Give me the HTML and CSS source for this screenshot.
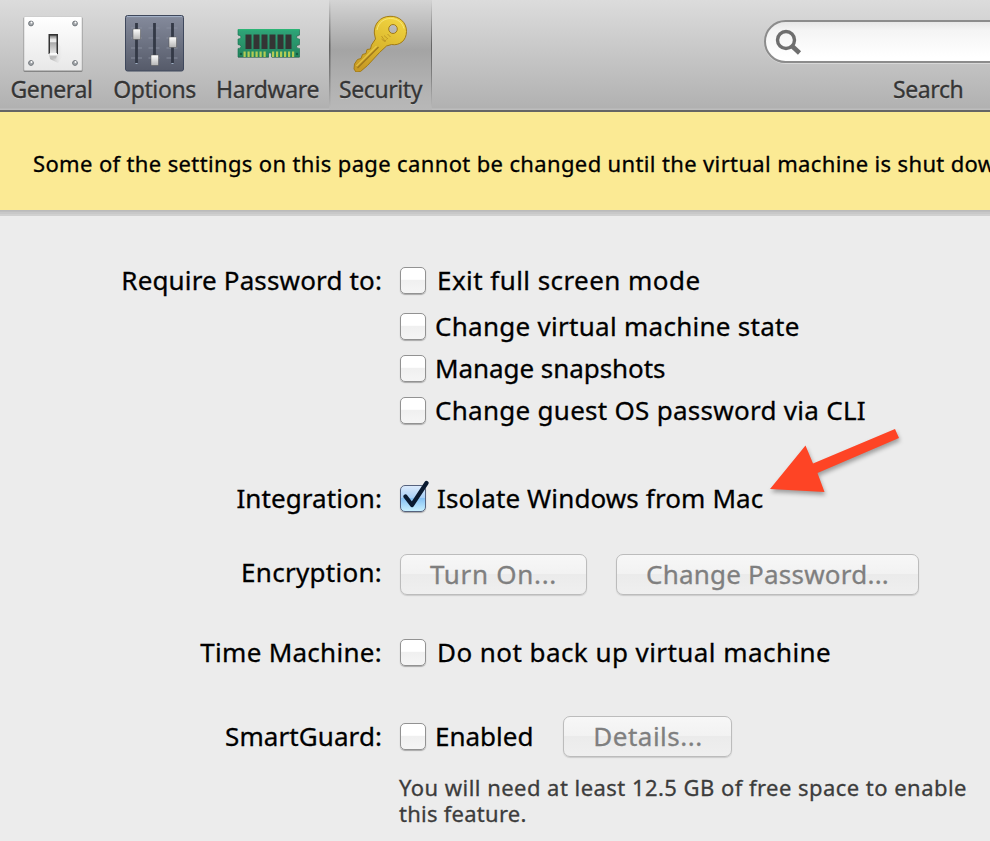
FILE: index.html
```html
<!DOCTYPE html>
<html lang="en">
<head>
<meta charset="utf-8">
<title>Security</title>
<link rel="stylesheet" href="styles.css">
</head>
<body>
<header class="toolbar">
  <nav class="tabs">
    <div class="tab tab-general">
      <svg class="icon" width="64" height="64" viewBox="0 0 64 64">
        <defs>
          <linearGradient id="plate" x2="0" y2="1"><stop stop-color="#fff"/><stop offset="1" stop-color="#e8e8e8"/></linearGradient>
          <linearGradient id="sw" x2="0" y2="1"><stop stop-color="#777"/><stop offset=".2" stop-color="#e8e8e8"/><stop offset=".32" stop-color="#eee"/><stop offset=".36" stop-color="#aaa"/><stop offset=".85" stop-color="#e2e2e2"/><stop offset="1" stop-color="#fff"/></linearGradient>
          <linearGradient id="sh" x2="1" y2="0"><stop stop-color="#888"/><stop offset="1" stop-color="#eee" stop-opacity="0"/></linearGradient>
        </defs>
        <rect x="3.500" y="9" width="59" height="55" rx="1.500" fill="#858585"/>
        <rect x="4" y="8.500" width="58" height="54" rx="1" fill="url(#plate)" stroke="#bbb" stroke-width=".6"/>
        <path d="M37 34l6 7q0 9-5 14l-8-4z" fill="url(#sh)" opacity=".7"/>
        <path d="M28.500 26h9.500v20h-9.500z" fill="#333"/>
        <rect x="30" y="27.500" width="6.500" height="20" fill="url(#sw)"/>
        <path d="M29 46h8.500l-1.500 4.500h-6z" fill="#bcbcbc"/>
        <path d="M29.500 45h7.500v2.500h-7.500z" fill="#fafafa"/>
        <g fill="#a3a7ab" stroke="#70757a"><circle cx="11" cy="15.500" r="2.400"/><circle cx="55" cy="15.500" r="2.400"/><circle cx="11" cy="55" r="2.400"/><circle cx="55" cy="55" r="2.400"/></g>
        <g fill="#fff"><circle cx="11.500" cy="14.500" r="1"/><circle cx="55.500" cy="14.500" r="1"/><circle cx="11.500" cy="54" r="1"/><circle cx="55.500" cy="54" r="1"/></g>
      </svg>
      <span class="tab-name">General</span>
    </div>
    <div class="tab tab-options">
      <svg class="icon" width="64" height="64" viewBox="0 0 64 64">
        <defs>
          <linearGradient id="board" x2="0" y2="1"><stop stop-color="#858b9c"/><stop offset="1" stop-color="#555a69"/></linearGradient>
          <linearGradient id="knob" x2="0" y2="1"><stop stop-color="#fff"/><stop offset="1" stop-color="#b5b5b5"/></linearGradient>
        </defs>
        <rect x="2.500" y="7.500" width="58" height="55.500" rx="2" fill="url(#board)" stroke="#3f485c"/>
        <path d="M4 8.600h55" stroke="#a7b4cb"/>
        <path d="M8 20h11M25.500 20h11M43.500 20h11M8 30h11M25.500 30h11M43.500 30h11M8 40h11M25.500 40h11M43.500 40h11M8 50h11M25.500 50h11M43.500 50h11" stroke="#8a90a0" stroke-width="1.500" opacity=".6"/>
        <path d="M13.500 15v40M31.500 15v40M49.500 15v40" stroke="#333946" stroke-width="2.800"/>
        <path d="M12.500 55.500h2M48.500 55.500h2" stroke="#9fb0c4"/>
        <g fill="url(#knob)" stroke="#555" stroke-width=".5"><rect x="10" y="21" width="7.500" height="10.500" rx=".7"/><rect x="28" y="47" width="7.500" height="10.500" rx=".7"/><rect x="46" y="29" width="7.500" height="10.500" rx=".7"/></g>
      </svg>
      <span class="tab-name">Options</span>
    </div>
    <div class="tab tab-hardware">
      <svg class="icon" width="64" height="64" viewBox="-1.500 -.5 64 64">
        <defs><linearGradient id="ram" x2="0" y2="1"><stop stop-color="#2fa478"/><stop offset="1" stop-color="#23855e"/></linearGradient></defs>
        <path d="M.500 22H62v5.500q-3 0-3 2t3 2V37q-3 0-3 2t3 2v8.500H34.500v-4q-2-2-3 0v4H.500v-9q3 0 3-2t-3-2v-5.500q3 0 3-2t-3-2z" fill="#555" opacity=".5"/>
        <path d="M.500 21H62v5.500q-3 0-3 2t3 2V36q-3 0-3 2t3 2v8.500H34V45q-2-2-3 0v3.500H.500V40q3 0 3-2t-3-2v-5.500q3 0 3-2t-3-2z" fill="url(#ram)" stroke="#16704e" stroke-width=".6"/>
        <path d="M.500 21.200h61.500" stroke="#28bd77"/>
        <path d="M8 26h6v14.500H8zM16 26h6v14.500h-6zM24 26h6v14.500h-6zM32 26h6v14.500h-6zM40 26h6v14.500h-6zM48 26h6v14.500h-6z" fill="#343434"/>
        <path d="M6 43h2.200v5.500H6zM10 43h2.200v5.500H10zM14 43h2.200v5.500H14zM18 43h2.200v5.500H18zM22 43h2.200v5.500H22zM26 43h2.200v5.500H26zM34.500 43h2.200v5.500h-2.200zM38.500 43h2.200v5.500h-2.200zM42.500 43h2.200v5.500h-2.200zM46.500 43h2.200v5.500h-2.200zM50.500 43h2.200v5.500h-2.200zM54.500 43h2.200v5.500h-2.200z" fill="#b4cb55"/>
        <circle cx="3.500" cy="45.500" r="1.200" fill="#155c40"/><circle cx="59.500" cy="45.500" r="1.200" fill="#155c40"/>
      </svg>
      <span class="tab-name">Hardware</span>
    </div>
    <div class="tab tab-security selected">
      <svg class="icon" width="64" height="64" viewBox="1.500 0 64 64">
        <defs><linearGradient id="gold" x1=".7" x2=".3" y2="1"><stop stop-color="#f0d340"/><stop offset=".5" stop-color="#dcb92e"/><stop offset="1" stop-color="#c89a24"/></linearGradient></defs>
        <path d="M42.500 8.300C32 8.500 26.500 16.500 26.800 25L28 31l-4 6-1 4-3.500.5-1 4-3.500 1-1.500 4-3.500 1-3 4.500-.5 5 2 3 4.500-.5 7-6 12-13 7-6.500 5-1.500C52 38 59 32.500 59 23.500 59 14 51.500 8 42.500 8.300zM45.500 16.500a4.300 4.500 0 1 1 0 9 4.300 4.500 0 0 1 0-9z" fill="url(#gold)" fill-rule="evenodd" stroke="#a27b16"/>
        <path d="M29.500 22C31 14 37 10.500 43 10.500c7 0 12 4 13.500 10" fill="none" stroke="#f8e678" stroke-width="1"/>
        <path d="M10 60l21-21" stroke="#9c761c" stroke-width="1.200"/><path d="M9 58l20-20" stroke="#f1d655"/>
        <path d="M34 31l3 2.500 2-2M36.500 27.500l4 3.500M40 26l3 3M34 28l4 6" fill="none" stroke="#c09a25"/>
      </svg>
      <span class="tab-name">Security</span>
    </div>
  </nav>
  <div class="search">
    <div class="search-field">
      <svg width="28" height="28" viewBox="0 0 28 28" fill="none" stroke="#6e6e6e"><circle cx="11" cy="11" r="8.500" stroke-width="3.400"/><path d="M17 17l7.500 7" stroke-width="4.600"/></svg>
    </div>
    <span class="tab-name">Search</span>
  </div>
</header>
<div class="banner"><span>Some of the settings on this page cannot be changed until the virtual machine is shut down.</span></div>
<main class="settings">
  <div class="row password"><div class="label"><span>Require Password to:</span></div>
    <div class="stack">
      <div class="choice wide loose"><i class="box"></i><span>Exit full screen mode</span></div>
      <div class="choice airy"><i class="box"></i><span>Change virtual machine state</span></div>
      <div class="choice tight"><i class="box"></i><span>Manage snapshots</span></div>
      <div class="choice airy"><i class="box"></i><span>Change guest OS password via CLI</span></div>
    </div>
  </div>
  <div class="row integration"><div class="label near"><span>Integration:</span></div>
    <div class="choice wide snug"><i class="box checked"><svg class="tick" width="30" height="34" viewBox="0 0 30 34"><path d="M6.500 18.500l6.500 8.500L27.500 5" fill="none" stroke="#0a1a30" stroke-width="4.200" stroke-linecap="round" stroke-linejoin="round"/></svg></i><span>Isolate Windows from Mac</span>
      <svg class="arrow" width="134" height="70" viewBox="0 0 134 70"><path d="M2 62L37.500 18.500l7.500 18L127 2l4 9L49.500 46l7 19z" fill="#fe4425"/></svg>
    </div>
  </div>
  <div class="row encryption"><div class="label airy"><span>Encryption:</span></div>
    <div class="buttons"><div class="button turn-on"><span>Turn On...</span></div><div class="button change"><span>Change Password...</span></div></div>
  </div>
  <div class="row time"><div class="label airy"><span>Time Machine:</span></div>
    <div class="choice wide loose"><i class="box"></i><span>Do not back up virtual machine</span></div>
  </div>
  <div class="row smart"><div class="label near"><span>SmartGuard:</span></div>
    <div class="choice"><i class="box"></i><span>Enabled</span></div><div class="button details"><span>Details...</span></div>
  </div>
  <p class="hint"><span>You will need at least 12.5 GB of free space to enable</span><br><span class="hint-end">this feature.</span></p>
</main>
</body>
</html>
```
FILE: styles.css
```css
* { box-sizing: border-box; }
body { margin: 0; width: 990px; height: 841px; overflow: hidden; background: #ececec; color: #000; font: 26px/36px "Noto Sans", sans-serif; -webkit-text-stroke: .3px; }
.toolbar { height: 112px; display: flex; justify-content: space-between; background: linear-gradient(#dcdcdc, #b1b1b1 108px, #bdbdbd 109px); border-bottom: 2px solid #656565; }
.tabs { display: flex; }
.tab { display: flex; flex-direction: column; align-items: center; padding-top: 8px; height: 110px; }
.tab-general { width: 103px; }
.tab-options { width: 103px; }
.tab-hardware { width: 123px; }
.tab-security { width: 103px; }
.selected { background: linear-gradient(#0000, #0006 45px, #0004 75px, #0000 108px) left / 1.5px 100% no-repeat, linear-gradient(#0000, #0006 45px, #0004 75px, #0000 108px) right / 1.5px 100% no-repeat, linear-gradient(#d4d4d4, #a4a4a4 50px, #b0b0b0 80px, #b8b8b8); }
.icon { display: block; }
.tab-name { font-size: 23px; line-height: 32px; letter-spacing: -.4px; color: #353535; text-shadow: 0 1px #ffffff50; white-space: nowrap; padding-top: 1px; }
.search { width: 226px; padding-top: 20px; overflow: hidden; }
.search-field { width: 260px; height: 43px; border: 2px solid #8c8c8c; border-radius: 22px; background: linear-gradient(#e7e7e7, #f4f4f4 8px, #fff 35px); box-shadow: 0 1px #d8d8d8; padding: 7px 0 0 9px; }
.search .tab-name { display: block; margin: 9px 0 0 129px; }
.banner { height: 98px; padding: 35px 0 0 33px; background: #fbea94; font-size: 22px; line-height: 32px; letter-spacing: .36px; white-space: nowrap; box-shadow: 0 1px 0 #bbb, 0 2px 0 #bfbfbf, 0 4px 0 #c8c8c8, 0 6px 0 #d0d0d0; overflow-x: clip; }
.settings { padding-top: 52px; }
.row { display: flex; height: 36px; white-space: nowrap; }
.label { width: 382px; margin-right: 18px; text-align: right; flex: none; letter-spacing: .15px; }
.near { letter-spacing: .08px; }
.airy { letter-spacing: .28px; }
.loose { letter-spacing: .44px; }
.tight { letter-spacing: -.06px; }
.snug { letter-spacing: .12px; }
.choice { display: flex; align-items: center; gap: 9px; height: 36px; }
.wide { gap: 11px; }
.box { width: 26px; height: 27px; border: 1.5px solid #929292; border-radius: 5px; background: linear-gradient(#fff 45%, #f0f0f0 50%, #f5f5f5); box-shadow: 0 1px 1px #aaa; flex: none; }
.checked { position: relative; border-color: #56627d; background: linear-gradient(#dbeafc, #a9d0f6 48%, #86c1f3 50%, #c8f0ff); }
.tick { position: absolute; left: -2px; top: -8px; }
.password { height: 166px; }
.stack .choice { margin-bottom: 6px; }
.stack .choice:first-child { margin-bottom: 10px; }
.integration { margin-top: 52px; position: relative; }
.arrow { position: absolute; left: 768px; top: -53px; filter: drop-shadow(1px 3px 2px #0005); }
.encryption { margin-top: 38px; }
.buttons { display: flex; gap: 29px; }
.button { height: 41px; border: 1.5px solid #bcbcbc; border-radius: 7px; background: linear-gradient(#f7f7f7, #f2f2f2 48%, #ebebeb 50%, #efefef); color: #7f7f7f; text-align: center; line-height: 38px; box-shadow: 0 1px 1px #ccc; flex: none; }
.turn-on { width: 187px; letter-spacing: .7px; }
.change { width: 303px; letter-spacing: .22px; }
.time { margin-top: 44px; }
.smart { margin-top: 48px; }
.details { width: 169px; margin-left: 30px; margin-top: -2px; letter-spacing: .5px; }
.hint { margin: 20px 0 0 399px; font-size: 22px; line-height: 26px; letter-spacing: .46px; color: #3c3c3c; white-space: nowrap; }
.hint-end { letter-spacing: .26px; }
```
